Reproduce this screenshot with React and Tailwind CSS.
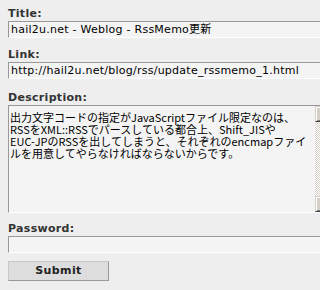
const LABEL = "block h-[15px] leading-[15px] text-[11px] font-bold text-[#333] tracking-[0.3px] [font-family:'DejaVu_Sans',Verdana,sans-serif]"
const INPUT = "h-[17px] w-[330px] border-t border-l border-b border-t-[#999] border-l-[#999] border-b-white bg-[#f4f4f4] pl-[2px] text-[11px] leading-[15px] tracking-[0.25px] text-black whitespace-nowrap overflow-hidden [font-family:'DejaVu_Sans',Verdana,'Noto_Sans_CJK_JP',sans-serif]"

function Field({ label, value, className = '' }) {
  return (
    <div className={className}>
      <label className={LABEL}>{label}</label>
      <div className={INPUT}>{value}</div>
    </div>
  )
}

function Scrollbar() {
  return (
    <div className="w-[16px] shrink-0 flex flex-col">
      <div className="h-[16px] bg-[#d4d0c8] border-t border-l border-t-[#d4d0c8] border-l-[#d4d0c8] border-b border-r border-b-[#404040] border-r-[#404040] shadow-[inset_1px_1px_0_#fff,inset_-1px_-1px_0_#808080] flex items-center justify-center">
        <svg width="7" height="4" viewBox="0 0 7 4"><path d="M3 0h1v1h1v1h1v1h1v1H0V3h1V2h1V1h1z" fill="#000" /></svg>
      </div>
      <div className="flex-1 bg-[repeating-conic-gradient(#d4d0c8_0_25%,#ffffff_0_50%)] bg-[length:2px_2px]" />
      <div className="h-[16px] bg-[#d4d0c8] border-t border-l border-t-[#d4d0c8] border-l-[#d4d0c8] border-b border-r border-b-[#404040] border-r-[#404040] shadow-[inset_1px_1px_0_#fff,inset_-1px_-1px_0_#808080] flex items-center justify-center">
        <svg width="7" height="4" viewBox="0 0 7 4"><path d="M0 0h7v1H6v1H5v1H4v1H3V3H2V2H1V1H0z" fill="#000" /></svg>
      </div>
    </div>
  )
}

export default function App() {
  const lines = [
    '出力文字コードの指定がJavaScriptファイル限定なのは、',
    'RSSをXML::RSSでパースしている都合上、Shift_JISや',
    'EUC-JPのRSSを出してしまうと、それぞれのencmapファイ',
    'ルを用意してやらなければならないからです。',
  ]
  return (
    <div className="w-[320px] h-[290px] overflow-hidden bg-[#eeeeee] pl-[8px] pt-[6px]">
      <Field label="Title:" value="hail2u.net - Weblog - RssMemo更新" />
      <Field className="mt-[9px]" label="Link:" value="http://hail2u.net/blog/rss/update_rssmemo_1.html" />
      <div className="mt-[11px]">
        <label className={LABEL}>Description:</label>
        <div className="h-[108px] w-[330px] flex border-t border-l border-b border-t-[#999] border-l-[#999] border-b-white bg-[#f4f4f4]">
          <div className="w-[306px] shrink-0 pl-[1px] pt-[5px] text-[11px] leading-[12px] text-black whitespace-nowrap overflow-hidden [font-family:'Noto_Sans_CJK_JP',sans-serif]">
            {lines.map((l) => (
              <div key={l}>{l}</div>
            ))}
          </div>
          <Scrollbar />
        </div>
      </div>
      <Field className="mt-[8px]" label="Password:" value="" />
      <button className="mt-[8px] h-[20px] w-[101px] bg-[#dddddd] border border-t-[#c8c8c8] border-l-[#c8c8c8] border-b-[#999] border-r-[#999] text-[11px] font-bold text-[#222] tracking-[0.4px] [font-family:'DejaVu_Sans',Verdana,sans-serif]">
        Submit
      </button>
    </div>
  )
}
